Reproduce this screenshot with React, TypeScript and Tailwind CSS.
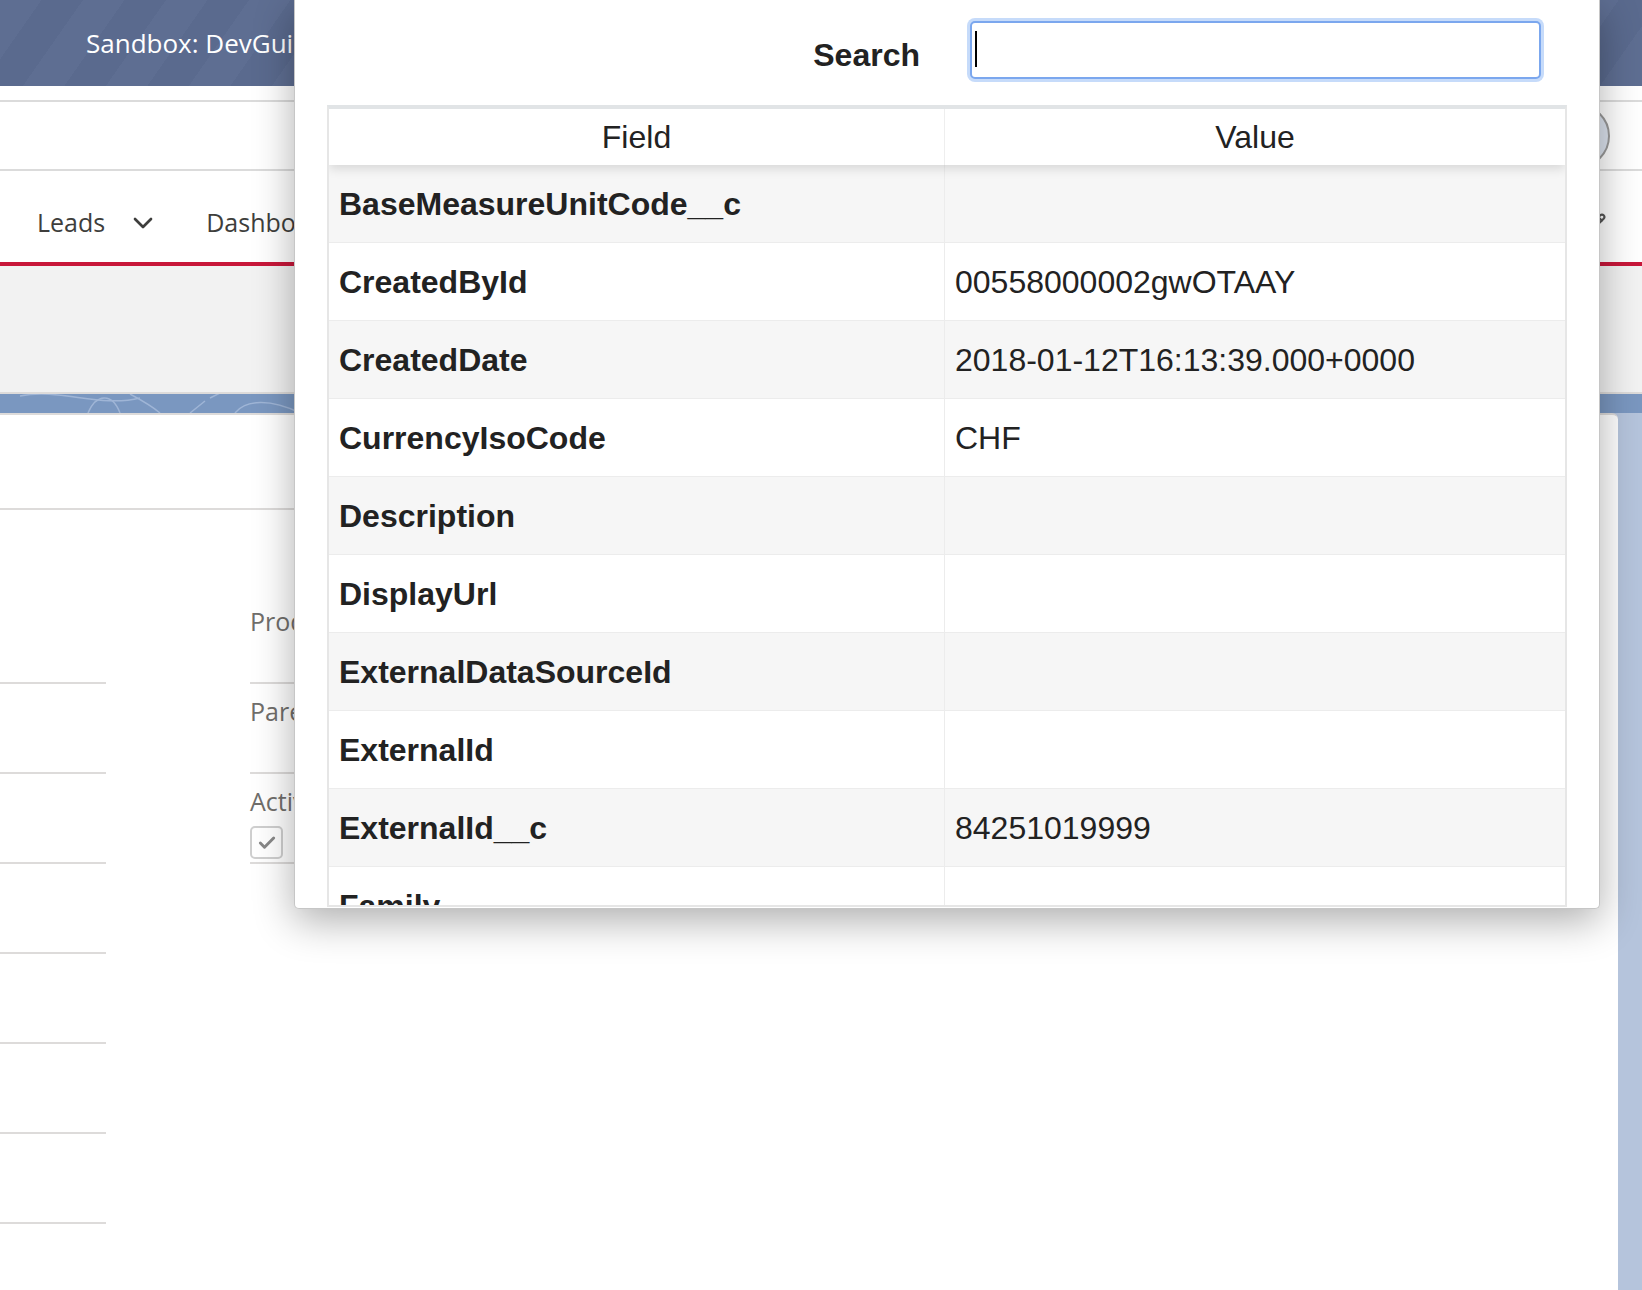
import React from 'react';
import { ChevronDown, Pencil, Check } from 'lucide-react';

interface FieldRow {
  name: string;
  value: string;
}

const rows: FieldRow[] = [
  { name: 'BaseMeasureUnitCode__c', value: '' },
  { name: 'CreatedById', value: '00558000002gwOTAAY' },
  { name: 'CreatedDate', value: '2018-01-12T16:13:39.000+0000' },
  { name: 'CurrencyIsoCode', value: 'CHF' },
  { name: 'Description', value: '' },
  { name: 'DisplayUrl', value: '' },
  { name: 'ExternalDataSourceId', value: '' },
  { name: 'ExternalId', value: '' },
  { name: 'ExternalId__c', value: '84251019999' },
  { name: 'Family', value: '' },
  { name: 'Id', value: '01t1w000001AbCdAAK' },
];

const leftFields = [0, 1, 2, 3, 4, 5, 6];

const RecordInspector: React.FC = () => {
  return (
    <div className="absolute left-[294px] top-0 flex h-[909px] w-[1306px] flex-col rounded-b-[5px] border-x border-b border-[#c6c6c6] bg-white font-['Liberation_Sans',Arial,sans-serif] text-[#222] shadow-[0_12px_40px_rgba(0,0,0,0.32)]">
      <div className="flex h-[105px] shrink-0 items-start justify-end pr-[58px] pt-[21px]">
        <div className="flex h-[58px] items-center gap-[50px]">
          <label className="pt-[10px] text-[32px] font-bold leading-[37px]">Search</label>
          <div className="relative h-[58px] w-[571px] rounded-[5px] border-2 border-[#7ba7ee] bg-white shadow-[0_0_0_3px_#c6dbfa]">
            <input readOnly className="h-full w-full bg-transparent px-[4px] text-[28px] outline-none" />
            <span className="absolute left-[3px] top-[8px] h-[36px] w-[2px] bg-black" />
          </div>
        </div>
      </div>

      <div className="ml-[32px] h-[802px] w-[1240px] overflow-hidden border-x-2 border-b-2 border-t-[4px] border-x-[#e6e6e6] border-b-[#e6e6e6] border-t-[#e1e4e6]">
        <div className="relative z-10 grid h-[56px] grid-cols-[616px_1fr] bg-white text-[32px] shadow-[0_4px_10px_rgba(0,0,0,0.12)]">
          <div className="flex items-center justify-center border-r border-[#eeeeee]">Field</div>
          <div className="flex items-center justify-center">Value</div>
        </div>
        {rows.map((row, i) => (
          <div
            key={row.name}
            className={`grid h-[78px] grid-cols-[616px_1fr] border-b border-[#ececec] text-[32px] ${i % 2 === 0 ? 'bg-[#f6f6f6]' : 'bg-white'}`}
          >
            <div className="flex items-center border-r border-[#ececec] pl-[10px] font-bold">{row.name}</div>
            <div className="flex items-center pl-[10px]">{row.value}</div>
          </div>
        ))}
      </div>
    </div>
  );
};

const App: React.FC = () => {
  return (
    <div className="relative h-[1290px] w-[1642px] overflow-hidden bg-white font-['Open_Sans',sans-serif]">
      {/* salesforce header */}
      <header className="flex h-[86px] items-center bg-[repeating-linear-gradient(125deg,#5e6e92_0px,#5e6e92_34px,#5a6a8e_34px,#5a6a8e_68px)] pl-[86px]">
        <span className="text-[26px] text-white">Sandbox: DevGuide</span>
      </header>
      <div className="h-[14px] bg-white" />
      <div className="flex h-[71px] items-center justify-end border-y-2 border-[#dbdbdb] pr-[32px]">
        <div className="h-[64px] w-[64px] rounded-full border-2 border-[#9a9a9a] bg-[#dde4ef]" />
      </div>
      <nav className="flex h-[91px] items-center pt-[13px] text-[25px] text-[#3e3e3c]">
        <span className="ml-[37px]">Leads</span>
        <ChevronDown className="ml-[22px] h-[32px] w-[32px] text-[#3e3e3c]" strokeWidth={2} />
        <span className="ml-[47px]">Dashboards</span>
        <Pencil className="ml-auto mr-[36px] h-[20px] w-[20px] text-[#555]" strokeWidth={2.5} />
      </nav>
      <div className="h-[4px] bg-[#c8173a]" />
      <div className="h-[128px] border-b-2 border-[#dddbda] bg-[#f2f2f2]" />

      <section className="relative bg-[#b5c4dc]">
        <div className="relative h-[19px] overflow-hidden bg-[#7a97c0]">
          <svg className="absolute left-0 top-0" width="1642" height="19" viewBox="0 0 1642 19" fill="none">
            <path d="M20 2 C 60 -6, 100 14, 140 4" stroke="#9fb5d6" strokeWidth="1.5" />
            <path d="M88 19 C 96 0, 112 -2, 120 19" stroke="#9fb5d6" strokeWidth="1.5" />
            <path d="M130 0 C 145 8, 152 12, 160 19" stroke="#9fb5d6" strokeWidth="1.5" />
            <path d="M190 19 L 205 7 M 210 4 L 222 -2" stroke="#9fb5d6" strokeWidth="1.5" />
            <path d="M235 19 C 245 6, 270 4, 300 19" stroke="#9fb5d6" strokeWidth="1.5" />
          </svg>
        </div>
        <div className="mr-[24px] h-[877px] rounded-tr-[6px] border-t-2 border-[#dddbda] bg-white">
          <div className="mr-[20px] h-[95px] border-b-2 border-[#dddbda]" />
          <div className="flex pt-[84px]">
            <div className="w-[106px]">
              {leftFields.map((f) => (
                <div key={f} className="h-[90px] border-b-2 border-[#dddbda]" />
              ))}
            </div>
            <div className="ml-[144px] w-[400px] text-[25px] text-[#706e6b]">
              <div className="h-[90px] border-b-2 border-[#dddbda] pt-[12px] leading-[30px]">Product Code</div>
              <div className="h-[90px] border-b-2 border-[#dddbda] pt-[12px] leading-[30px]">Parent Product</div>
              <div className="h-[90px] border-b-2 border-[#dddbda] pt-[12px] leading-[30px]">
                <div>Active</div>
                <div className="mt-[10px] flex h-[33px] w-[33px] items-center justify-center rounded-[5px] border-2 border-[#cfcfcf] bg-white">
                  <Check className="h-[20px] w-[20px] text-[#888]" strokeWidth={3.5} />
                </div>
              </div>
            </div>
          </div>
        </div>
      </section>

      <RecordInspector />
    </div>
  );
};

export default App;
